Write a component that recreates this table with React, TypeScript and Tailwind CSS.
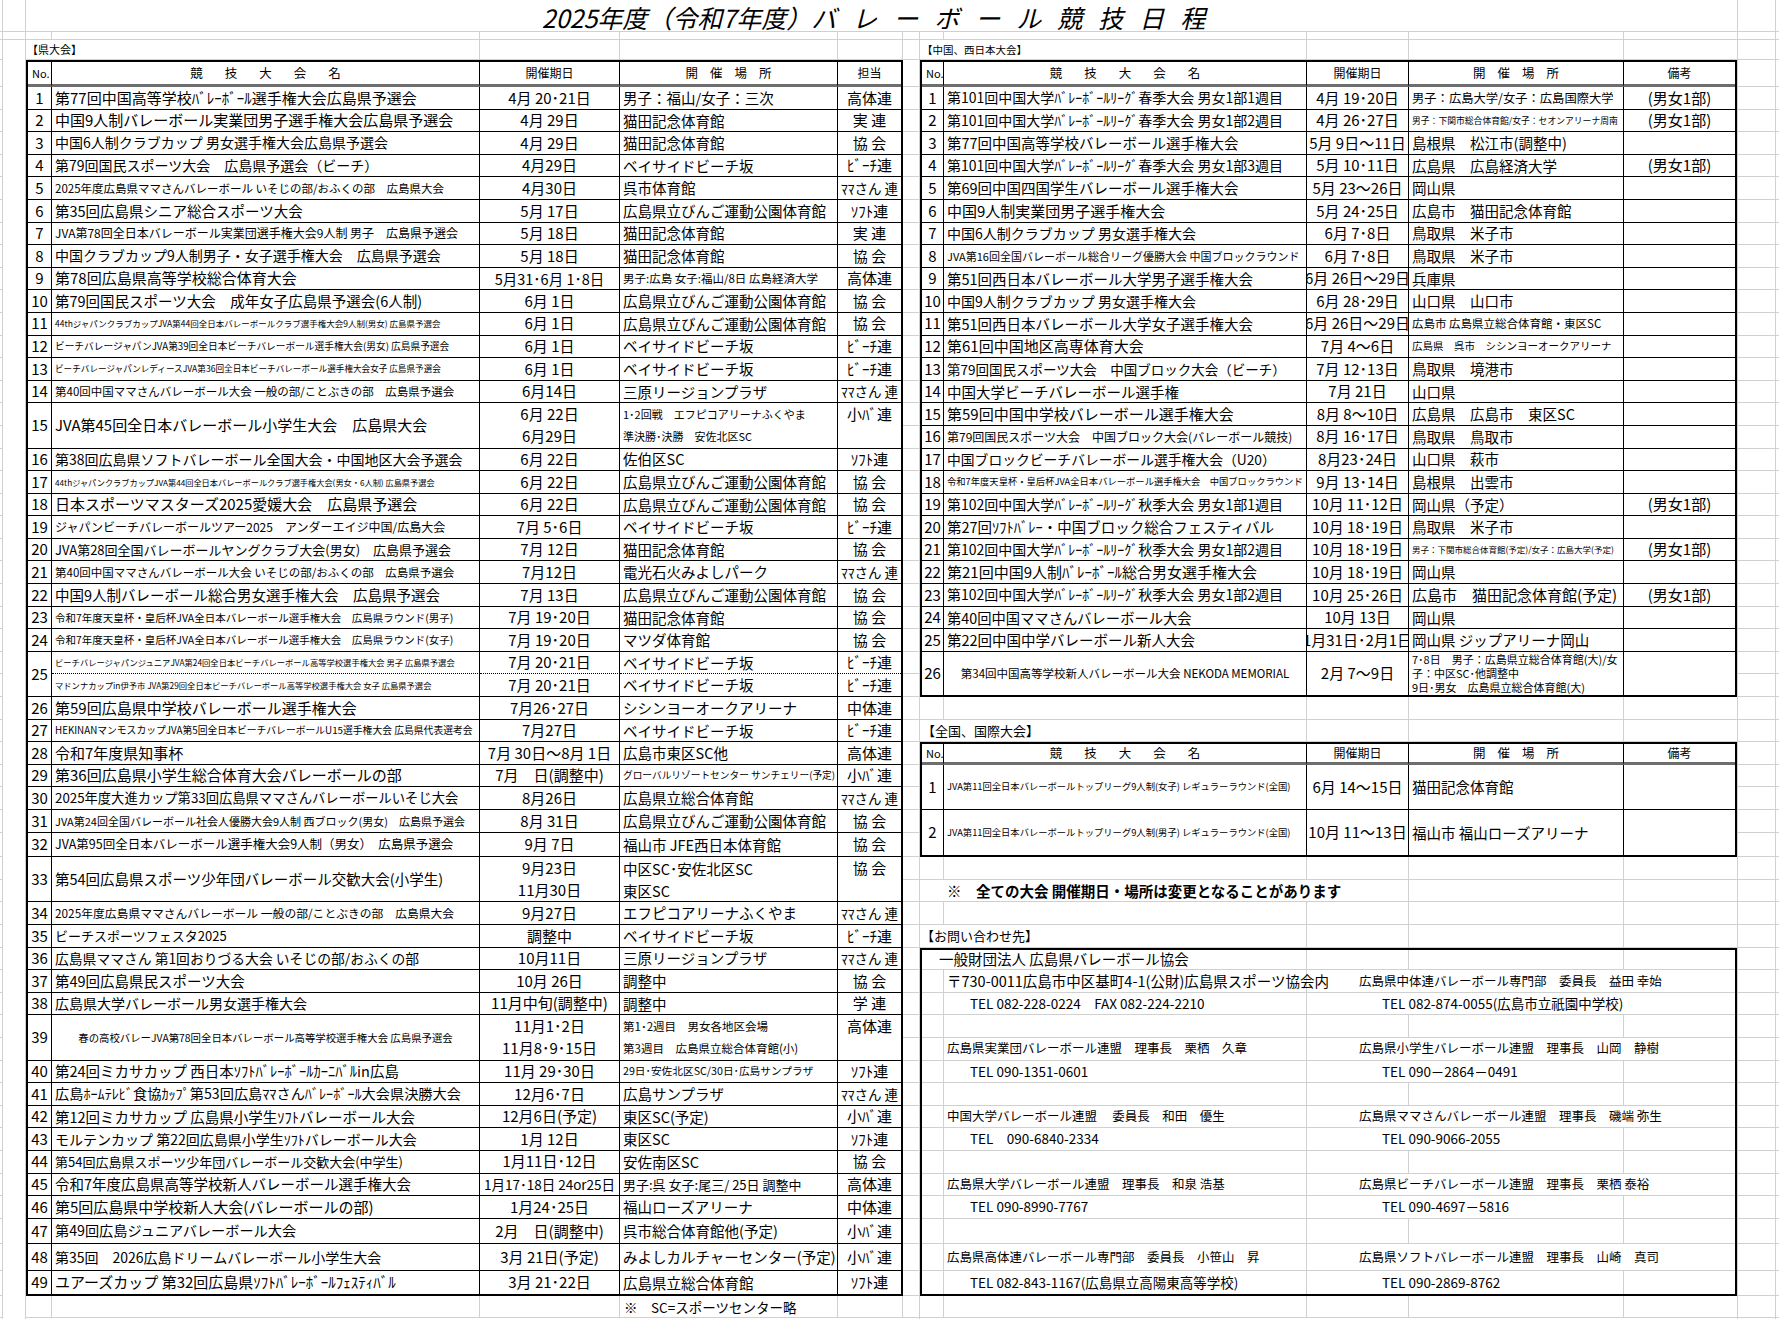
import React from 'react';
import clsx, { type ClassValue } from 'clsx';
import { twMerge } from 'tailwind-merge';

const cn = (...inputs: ClassValue[]) => twMerge(clsx(inputs));

type Pair = string | [string, string];

interface KenEntry {
  no: number;
  name: Pair;
  n?: string;
  date: Pair;
  d?: string;
  venue: Pair;
  v?: string;
  tag: Pair;
  dotted?: boolean;
  center?: boolean;
}

interface BlockEntry {
  no: number;
  name: string;
  n?: string;
  date: string;
  venue: React.ReactNode;
  v?: string;
  note?: string;
  center?: boolean;
}

// sheet row heights below the table headers
const S_ROWS: string[] = [
  ...Array(33).fill('h-[22.6px]'),
  'h-[24.6px]',
  ...Array(16).fill('h-[22.6px]'),
  'h-[25.6px]',
  'h-[26.6px]',
  'h-[25px]',
];
const BODY_ROWS = ['h-[8px]', 'h-[20px]', 'h-[27px]', ...S_ROWS, 'h-[22.6px]', 'h-[22.6px]'];
const PAGE_ROWS = ['h-[32px]', ...BODY_ROWS];

const W_L = ['w-[26px]', 'w-[428px]', 'w-[140px]', 'w-[218px]', 'w-[65px]'];
const W_R = ['w-[24px]', 'w-[363px]', 'w-[102px]', 'w-[215px]', 'w-[113px]'];

const KEN: KenEntry[] = [
  { no: 1, name: '第77回中国高等学校ﾊﾞﾚｰﾎﾞｰﾙ選手権大会広島県予選会', date: '4月 20･21日', venue: '男子：福山/女子：三次', tag: '高体連' },
  { no: 2, name: '中国9人制バレーボール実業団男子選手権大会広島県予選会', date: '4月 29日', venue: '猫田記念体育館', tag: '実 連' },
  { no: 3, name: '中国6人制クラブカップ 男女選手権大会広島県予選会', n: 'text-[14px]', date: '4月 29日', venue: '猫田記念体育館', tag: '協 会' },
  { no: 4, name: '第79回国民スポーツ大会　広島県予選会（ビーチ）', n: 'text-[14px]', date: '4月29日', venue: 'ベイサイドビーチ坂', tag: 'ﾋﾞｰﾁ連' },
  { no: 5, name: '2025年度広島県ママさんバレーボール いそじの部/おふくの部　広島県大会', n: 'text-[11.5px]', date: '4月30日', venue: '呉市体育館', tag: 'ﾏﾏさん 連' },
  { no: 6, name: '第35回広島県シニア総合スポーツ大会', n: 'text-[14.5px]', date: '5月 17日', venue: '広島県立びんご運動公園体育館', tag: 'ｿﾌﾄ連' },
  { no: 7, name: 'JVA第78回全日本バレーボール実業団選手権大会9人制 男子　広島県予選会', n: 'text-[12px]', date: '5月 18日', venue: '猫田記念体育館', tag: '実 連' },
  { no: 8, name: '中国クラブカップ9人制男子・女子選手権大会　広島県予選会', n: 'text-[14px]', date: '5月 18日', venue: '猫田記念体育館', tag: '協 会' },
  { no: 9, name: '第78回広島県高等学校総合体育大会', date: '5月31･6月 1･8日', d: 'text-[14.5px]', venue: '男子:広島 女子:福山/8日 広島経済大学', v: 'text-[11.5px]', tag: '高体連' },
  { no: 10, name: '第79回国民スポーツ大会　成年女子広島県予選会(6人制)', n: 'text-[14.5px]', date: '6月 1日', venue: '広島県立びんご運動公園体育館', tag: '協 会' },
  { no: 11, name: '44thジャパンクラブカップJVA第44回全日本バレーボールクラブ選手権大会9人制(男女) 広島県予選会', n: 'text-[8.5px]', date: '6月 1日', venue: '広島県立びんご運動公園体育館', tag: '協 会' },
  { no: 12, name: 'ビーチバレージャパンJVA第39回全日本ビーチバレーボール選手権大会(男女) 広島県予選会', n: 'text-[9.7px]', date: '6月 1日', venue: 'ベイサイドビーチ坂', tag: 'ﾋﾞｰﾁ連' },
  { no: 13, name: 'ビーチバレージャパンレディースJVA第36回全日本ビーチバレーボール選手権大会女子 広島県予選会', n: 'text-[8.6px]', date: '6月 1日', venue: 'ベイサイドビーチ坂', tag: 'ﾋﾞｰﾁ連' },
  { no: 14, name: '第40回中国ママさんバレーボール大会 一般の部/ことぶきの部　広島県予選会', n: 'text-[11.5px]', date: '6月14日', venue: '三原リージョンプラザ', tag: 'ﾏﾏさん 連' },
  { no: 15, name: 'JVA第45回全日本バレーボール小学生大会　広島県大会', date: ['6月 22日', '6月29日'], venue: ['1･2回戦　エフピコアリーナふくやま', '準決勝･決勝　安佐北区SC'], v: 'text-[11px]', tag: ['小ﾊﾞ連', ''] },
  { no: 16, name: '第38回広島県ソフトバレーボール全国大会・中国地区大会予選会', n: 'text-[14px]', date: '6月 22日', venue: '佐伯区SC', tag: 'ｿﾌﾄ連' },
  { no: 17, name: '44thジャパンクラブカップJVA第44回全日本バレーボールクラブ選手権大会(男女・6人制) 広島県予選会', n: 'text-[8.2px]', date: '6月 22日', venue: '広島県立びんご運動公園体育館', tag: '協 会' },
  { no: 18, name: '日本スポーツマスターズ2025愛媛大会　広島県予選会', date: '6月 22日', venue: '広島県立びんご運動公園体育館', tag: '協 会' },
  { no: 19, name: 'ジャパンビーチバレーボールツアー2025　アンダーエイジ中国/広島大会', n: 'text-[12px]', date: '7月 5･6日', venue: 'ベイサイドビーチ坂', tag: 'ﾋﾞｰﾁ連' },
  { no: 20, name: 'JVA第28回全国バレーボールヤングクラブ大会(男女)　広島県予選会', n: 'text-[13px]', date: '7月 12日', venue: '猫田記念体育館', tag: '協 会' },
  { no: 21, name: '第40回中国ママさんバレーボール大会 いそじの部/おふくの部　広島県予選会', n: 'text-[11.5px]', date: '7月12日', venue: '電光石火みよしパーク', tag: 'ﾏﾏさん 連' },
  { no: 22, name: '中国9人制バレーボール総合男女選手権大会　広島県予選会', n: 'text-[14.5px]', date: '7月 13日', venue: '広島県立びんご運動公園体育館', tag: '協 会' },
  { no: 23, name: '令和7年度天皇杯・皇后杯JVA全日本バレーボール選手権大会　広島県ラウンド(男子)', n: 'text-[10.5px]', date: '7月 19･20日', venue: '猫田記念体育館', tag: '協 会' },
  { no: 24, name: '令和7年度天皇杯・皇后杯JVA全日本バレーボール選手権大会　広島県ラウンド(女子)', n: 'text-[10.5px]', date: '7月 19･20日', venue: 'マツダ体育館', tag: '協 会' },
  {
    no: 25,
    name: [
      'ビーチバレージャパンジュニアJVA第24回全日本ビーチバレーボール高等学校選手権大会 男子 広島県予選会',
      'マドンナカップin伊予市 JVA第29回全日本ビーチバレーボール高等学校選手権大会 女子 広島県予選会',
    ],
    n: 'text-[8.3px]',
    date: ['7月 20･21日', '7月 20･21日'],
    venue: ['ベイサイドビーチ坂', 'ベイサイドビーチ坂'],
    tag: ['ﾋﾞｰﾁ連', 'ﾋﾞｰﾁ連'],
    dotted: true,
  },
  { no: 26, name: '第59回広島県中学校バレーボール選手権大会', date: '7月26･27日', venue: 'シシンヨーオークアリーナ', tag: '中体連' },
  { no: 27, name: 'HEKINANマンモスカップJVA第5回全日本ビーチバレーボールU15選手権大会 広島県代表選考会', n: 'text-[9.8px]', date: '7月27日', venue: 'ベイサイドビーチ坂', tag: 'ﾋﾞｰﾁ連' },
  { no: 28, name: '令和7年度県知事杯', date: '7月 30日～8月 1日', venue: '広島市東区SC他', tag: '高体連' },
  { no: 29, name: '第36回広島県小学生総合体育大会バレーボールの部', date: '7月　日(調整中)', venue: 'グローバルリゾートセンター サンチェリー(予定)', v: 'text-[9.7px]', tag: '小ﾊﾞ連' },
  { no: 30, name: '2025年度大進カップ第33回広島県ママさんバレーボールいそじ大会', n: 'text-[13.3px]', date: '8月26日', venue: '広島県立総合体育館', tag: 'ﾏﾏさん 連' },
  { no: 31, name: 'JVA第24回全国バレーボール社会人優勝大会9人制 西ブロック(男女)　広島県予選会', n: 'text-[11px]', date: '8月 31日', venue: '広島県立びんご運動公園体育館', tag: '協 会' },
  { no: 32, name: 'JVA第95回全日本バレーボール選手権大会9人制（男女）　広島県予選会', n: 'text-[12.5px]', date: '9月 7日', venue: '福山市 JFE西日本体育館', tag: '協 会' },
  { no: 33, name: '第54回広島県スポーツ少年団バレーボール交歓大会(小学生)', n: 'text-[14.5px]', date: ['9月23日', '11月30日'], venue: ['中区SC･安佐北区SC', '東区SC'], tag: ['協 会', ''] },
  { no: 34, name: '2025年度広島県ママさんバレーボール 一般の部/ことぶきの部　広島県大会', n: 'text-[11.8px]', date: '9月27日', venue: 'エフピコアリーナふくやま', tag: 'ﾏﾏさん 連' },
  { no: 35, name: 'ビーチスポーツフェスタ2025', n: 'text-[13px]', date: '調整中', venue: 'ベイサイドビーチ坂', tag: 'ﾋﾞｰﾁ連' },
  { no: 36, name: '広島県ママさん 第1回おりづる大会 いそじの部/おふくの部', n: 'text-[13.8px]', date: '10月11日', venue: '三原リージョンプラザ', tag: 'ﾏﾏさん 連' },
  { no: 37, name: '第49回広島県民スポーツ大会', n: 'text-[14.5px]', date: '10月 26日', venue: '調整中', tag: '協 会' },
  { no: 38, name: '広島県大学バレーボール男女選手権大会', n: 'text-[14px]', date: '11月中旬(調整中)', venue: '調整中', tag: '学 連' },
  { no: 39, name: '春の高校バレーJVA第78回全日本バレーボール高等学校選手権大会 広島県予選会', n: 'text-[10.4px]', center: true, date: ['11月1･2日', '11月8･9･15日'], venue: ['第1･2週目　男女各地区会場', '第3週目　広島県立総合体育館(小)'], v: 'text-[11.5px]', tag: ['高体連', ''] },
  { no: 40, name: '第24回ミカサカップ 西日本ｿﾌﾄﾊﾞﾚｰﾎﾞｰﾙｶｰﾆﾊﾞﾙin広島', n: 'text-[14.5px]', date: '11月 29･30日', venue: '29日･安佐北区SC/30日･広島サンプラザ', v: 'text-[10.7px]', tag: 'ｿﾌﾄ連' },
  { no: 41, name: '広島ﾎｰﾑﾃﾚﾋﾞ食協ｶｯﾌﾟ第53回広島ﾏﾏさんﾊﾞﾚｰﾎﾞｰﾙ大会県決勝大会', n: 'text-[14.2px]', date: '12月6･7日', venue: '広島サンプラザ', tag: 'ﾏﾏさん 連' },
  { no: 42, name: '第12回ミカサカップ 広島県小学生ｿﾌﾄバレーボール大会', n: 'text-[14.5px]', date: '12月6日(予定)', venue: '東区SC(予定)', tag: '小ﾊﾞ連' },
  { no: 43, name: 'モルテンカップ 第22回広島県小学生ｿﾌﾄバレーボール大会', n: 'text-[14px]', date: '1月 12日', venue: '東区SC', tag: 'ｿﾌﾄ連' },
  { no: 44, name: '第54回広島県スポーツ少年団バレーボール交歓大会(中学生)', n: 'text-[13px]', date: '1月11日･12日', venue: '安佐南区SC', tag: '協 会' },
  { no: 45, name: '令和7年度広島県高等学校新人バレーボール選手権大会', n: 'text-[14.5px]', date: '1月17･18日 24or25日', d: 'text-[13.5px]', venue: '男子:呉 女子:尾三/ 25日 調整中', v: 'text-[13px]', tag: '高体連' },
  { no: 46, name: '第5回広島県中学校新人大会(バレーボールの部)', date: '1月24･25日', venue: '福山ローズアリーナ', tag: '中体連' },
  { no: 47, name: '第49回広島ジュニアバレーボール大会', n: 'text-[14.2px]', date: '2月　日(調整中)', venue: '呉市総合体育館他(予定)', tag: '小ﾊﾞ連' },
  { no: 48, name: '第35回　2026広島ドリームバレーボール小学生大会', n: 'text-[14px]', date: '3月 21日(予定)', venue: 'みよしカルチャーセンター(予定)', tag: '小ﾊﾞ連' },
  { no: 49, name: 'ユアーズカップ 第32回広島県ｿﾌﾄﾊﾞﾚｰﾎﾞｰﾙﾌｪｽﾃｨﾊﾞﾙ', date: '3月 21･22日', venue: '広島県立総合体育館', tag: 'ｿﾌﾄ連' },
];

const BUBU = '(男女1部)';

const CHUGOKU: BlockEntry[] = [
  { no: 1, name: '第101回中国大学ﾊﾞﾚｰﾎﾞｰﾙﾘｰｸﾞ春季大会 男女1部1週目', n: 'text-[14px]', date: '4月 19･20日', venue: '男子：広島大学/女子：広島国際大学', v: 'text-[12.3px]', note: BUBU },
  { no: 2, name: '第101回中国大学ﾊﾞﾚｰﾎﾞｰﾙﾘｰｸﾞ春季大会 男女1部2週目', n: 'text-[14px]', date: '4月 26･27日', venue: '男子：下関市総合体育館/女子：セオンアリーナ周南', v: 'text-[8.8px]', note: BUBU },
  { no: 3, name: '第77回中国高等学校バレーボール選手権大会', date: '5月 9日～11日', venue: '島根県　松江市(調整中)' },
  { no: 4, name: '第101回中国大学ﾊﾞﾚｰﾎﾞｰﾙﾘｰｸﾞ春季大会 男女1部3週目', n: 'text-[14px]', date: '5月 10･11日', venue: '広島県　広島経済大学', note: BUBU },
  { no: 5, name: '第69回中国四国学生バレーボール選手権大会', date: '5月 23～26日', venue: '岡山県' },
  { no: 6, name: '中国9人制実業団男子選手権大会', n: 'text-[15px]', date: '5月 24･25日', venue: '広島市　猫田記念体育館' },
  { no: 7, name: '中国6人制クラブカップ 男女選手権大会', n: 'text-[14px]', date: '6月 7･8日', venue: '鳥取県　米子市' },
  { no: 8, name: 'JVA第16回全国バレーボール総合リーグ優勝大会 中国ブロックラウンド', n: 'text-[11px]', date: '6月 7･8日', venue: '鳥取県　米子市' },
  { no: 9, name: '第51回西日本バレーボール大学男子選手権大会', date: '6月 26日～29日', venue: '兵庫県' },
  { no: 10, name: '中国9人制クラブカップ 男女選手権大会', n: 'text-[14px]', date: '6月 28･29日', venue: '山口県　山口市' },
  { no: 11, name: '第51回西日本バレーボール大学女子選手権大会', date: '6月 26日～29日', venue: '広島市 広島県立総合体育館・東区SC', v: 'text-[11.5px]' },
  { no: 12, name: '第61回中国地区高専体育大会', n: 'text-[15px]', date: '7月 4～6日', venue: '広島県　呉市　シシンヨーオークアリーナ', v: 'text-[10.5px]' },
  { no: 13, name: '第79回国民スポーツ大会　中国ブロック大会（ビーチ）', n: 'text-[13.5px]', date: '7月 12･13日', venue: '鳥取県　境港市' },
  { no: 14, name: '中国大学ビーチバレーボール選手権', date: '7月 21日', venue: '山口県' },
  { no: 15, name: '第59回中国中学校バレーボール選手権大会', n: 'text-[15px]', date: '8月 8～10日', venue: '広島県　広島市　東区SC' },
  { no: 16, name: '第79回国民スポーツ大会　中国ブロック大会(バレーボール競技)', n: 'text-[12px]', date: '8月 16･17日', venue: '鳥取県　鳥取市' },
  { no: 17, name: '中国ブロックビーチバレーボール選手権大会（U20）', n: 'text-[13.8px]', date: '8月23･24日', venue: '山口県　萩市' },
  { no: 18, name: '令和7年度天皇杯・皇后杯JVA全日本バレーボール選手権大会　中国ブロックラウンド', n: 'text-[9.3px]', date: '9月 13･14日', venue: '島根県　出雲市' },
  { no: 19, name: '第102回中国大学ﾊﾞﾚｰﾎﾞｰﾙﾘｰｸﾞ秋季大会 男女1部1週目', n: 'text-[14px]', date: '10月 11･12日', venue: '岡山県（予定）', note: BUBU },
  { no: 20, name: '第27回ｿﾌﾄﾊﾞﾚｰ・中国ブロック総合フェスティバル', date: '10月 18･19日', venue: '鳥取県　米子市' },
  { no: 21, name: '第102回中国大学ﾊﾞﾚｰﾎﾞｰﾙﾘｰｸﾞ秋季大会 男女1部2週目', n: 'text-[14px]', date: '10月 18･19日', venue: '男子：下関市総合体育館(予定)/女子：広島大学(予定)', v: 'text-[8.5px]', note: BUBU },
  { no: 22, name: '第21回中国9人制ﾊﾞﾚｰﾎﾞｰﾙ総合男女選手権大会', n: 'text-[15px]', date: '10月 18･19日', venue: '岡山県' },
  { no: 23, name: '第102回中国大学ﾊﾞﾚｰﾎﾞｰﾙﾘｰｸﾞ秋季大会 男女1部2週目', n: 'text-[14px]', date: '10月 25･26日', venue: '広島市　猫田記念体育館(予定)', v: 'text-[15px]', note: BUBU },
  { no: 24, name: '第40回中国ママさんバレーボール大会', n: 'text-[14.3px]', date: '10月 13日', venue: '岡山県' },
  { no: 25, name: '第22回中国中学バレーボール新人大会', date: '1月31日･2月1日', venue: '岡山県 ジップアリーナ岡山' },
  {
    no: 26,
    name: '第34回中国高等学校新人バレーボール大会 NEKODA MEMORIAL',
    n: 'text-[11.5px]',
    center: true,
    date: '2月 7～9日',
    venue: (
      <span className="flex flex-col gap-0 leading-[14px]">
        <span>7･8日　男子：広島県立総合体育館(大)/女</span>
        <span>子：中区SC･他調整中</span>
        <span>9日･男女　広島県立総合体育館(大)</span>
      </span>
    ),
    v: 'text-[11px]',
  },
];

const ZENKOKU: BlockEntry[] = [
  { no: 1, name: 'JVA第11回全日本バレーボールトップリーグ9人制(女子) レギュラーラウンド(全国)', n: 'text-[9.3px]', date: '6月 14～15日', venue: '猫田記念体育館' },
  { no: 2, name: 'JVA第11回全日本バレーボールトップリーグ9人制(男子) レギュラーラウンド(全国)', n: 'text-[9.3px]', date: '10月 11～13日', venue: '福山市 福山ローズアリーナ' },
];

type ContactRow =
  | { kind: 'empty' }
  | { kind: 'head'; a: string }
  | { kind: 'name'; a: string; b: string; as?: string }
  | { kind: 'tel'; a: string; b: string; wide?: boolean };

const CONTACT: ContactRow[] = [
  { kind: 'head', a: '一般財団法人 広島県バレーボール協会' },
  { kind: 'name', a: '〒730-0011広島市中区基町4-1(公財)広島県スポーツ協会内', as: 'text-[14.5px]', b: '広島県中体連バレーボール専門部　委員長　益田 幸始' },
  { kind: 'tel', a: 'TEL 082-228-0224　FAX 082-224-2210', b: 'TEL 082-874-0055(広島市立祇園中学校)', wide: true },
  { kind: 'empty' },
  { kind: 'name', a: '広島県実業団バレーボール連盟　理事長　栗栖　久章', b: '広島県小学生バレーボール連盟　理事長　山岡　静樹' },
  { kind: 'tel', a: 'TEL 090-1351-0601', b: 'TEL 090－2864－0491' },
  { kind: 'empty' },
  { kind: 'name', a: '中国大学バレーボール連盟　 委員長　和田　優生', b: '広島県ママさんバレーボール連盟　理事長　磯端 弥生' },
  { kind: 'tel', a: 'TEL　090-6840-2334', b: 'TEL 090-9066-2055' },
  { kind: 'empty' },
  { kind: 'name', a: '広島県大学バレーボール連盟　理事長　和泉 浩基', b: '広島県ビーチバレーボール連盟　理事長　栗栖 泰裕' },
  { kind: 'tel', a: 'TEL 090-8990-7767', b: 'TEL 090-4697－5816' },
  { kind: 'empty' },
  { kind: 'name', a: '広島県高体連バレーボール専門部　委員長　小笹山　昇', b: '広島県ソフトバレーボール連盟　理事長　山崎　真司' },
  { kind: 'tel', a: 'TEL 082-843-1167(広島県立高陽東高等学校)', b: 'TEL 090-2869-8762' },
];

function Td({ className, children }: { className?: string; children?: React.ReactNode }) {
  return (
    <div
      className={cn(
        'flex min-w-0 items-center overflow-hidden whitespace-nowrap border-b border-r border-black leading-none',
        className,
      )}
    >
      {children}
    </div>
  );
}

function Lc({ w, className, children }: { w?: string; className?: string; children?: React.ReactNode }) {
  return (
    <div
      className={cn(
        'flex shrink-0 items-center whitespace-nowrap border-b border-r border-[#d0d0d0] leading-none',
        w,
        className,
      )}
    >
      {children}
    </div>
  );
}

function LightRow({ h, widths, children }: { h: string; widths?: string[]; children?: React.ReactNode }) {
  return <div className={cn('flex shrink-0', h)}>{children ?? widths?.map((w, i) => <Lc key={i} w={w} />)}</div>;
}

function Strip({ rows, className }: { rows: string[]; className?: string }) {
  return (
    <div className={cn('flex shrink-0 flex-col', className)}>
      {rows.map((h, i) => (
        <div key={i} className={cn('shrink-0 border-b border-[#d0d0d0]', h)} />
      ))}
    </div>
  );
}

function Spaced({ text, className }: { text: string; className?: string }) {
  return (
    <span className={cn('flex', className)}>
      {text.split('').map((c, i) => (
        <span key={i}>{c}</span>
      ))}
    </span>
  );
}

function HeadRow({ last }: { last: string }) {
  const h = 'border-b-[3px] border-b-[#6e6e6e] text-[12.5px]';
  return (
    <>
      <Td className={cn(h, 'pl-[4px] text-[11px]')}>No.</Td>
      <Td className={cn(h, 'justify-center')}>
        <Spaced text="競技大会名" className="gap-[22px]" />
      </Td>
      <Td className={cn(h, 'justify-center text-[12px]')}>開催期日</Td>
      <Td className={cn(h, 'justify-center')}>
        <Spaced text="開催場所" className="gap-[12px]" />
      </Td>
      <Td className={cn(h, 'justify-center border-r-0 text-[12px]')}>{last}</Td>
    </>
  );
}

function tagSize(t: string) {
  return t.includes('ﾏﾏ') ? 'text-[13.5px]' : 'text-[15px]';
}

function KenRow({ e, last }: { e: KenEntry; last: boolean }) {
  const nameCls = cn('pl-[3px]', e.n ?? 'text-[15px]', e.center && 'justify-center pl-0');
  const dateCls = cn('justify-center', e.d ?? 'text-[15px]');
  const venueCls = cn('pl-[3px]', e.v ?? 'text-[14.5px]');
  const end = last ? 'border-b-0' : '';

  if (!Array.isArray(e.date)) {
    const tag = e.tag as string;
    return (
      <>
        <Td className={cn('justify-center text-[15px]', end)}>{e.no}</Td>
        <Td className={cn(nameCls, end)}>{e.name}</Td>
        <Td className={cn(dateCls, end)}>{e.date}</Td>
        <Td className={cn(venueCls, end)}>{e.venue}</Td>
        <Td className={cn('justify-center border-r-0', tagSize(tag), end)}>{tag}</Td>
      </>
    );
  }

  const venue = e.venue as [string, string];
  const tag = e.tag as [string, string];
  const top = e.dotted ? '[border-bottom-style:dotted]' : 'border-b-0';
  const split = Array.isArray(e.name);
  return (
    <>
      <Td className={cn('row-span-2 justify-center text-[15px]', end)}>{e.no}</Td>
      {split ? (
        <Td className={cn(nameCls, top)}>{e.name[0]}</Td>
      ) : (
        <Td className={cn('row-span-2', nameCls, end)}>{e.name}</Td>
      )}
      <Td className={cn(dateCls, top)}>{e.date[0]}</Td>
      <Td className={cn(venueCls, top)}>{venue[0]}</Td>
      <Td className={cn('justify-center border-r-0', tagSize(tag[0]), top)}>{tag[0]}</Td>
      {split && <Td className={cn(nameCls, end)}>{e.name[1]}</Td>}
      <Td className={cn(dateCls, end)}>{e.date[1]}</Td>
      <Td className={cn(venueCls, end)}>{venue[1]}</Td>
      <Td className={cn('justify-center border-r-0', tagSize(tag[1]), end)}>{tag[1]}</Td>
    </>
  );
}

function BlockRow({ e, last }: { e: BlockEntry; last: boolean }) {
  const end = last ? 'border-b-0' : '';
  return (
    <>
      <Td className={cn('justify-center text-[15px]', end)}>{e.no}</Td>
      <Td className={cn('pl-[3px]', e.n ?? 'text-[14.5px]', e.center && 'justify-center pl-0', end)}>{e.name}</Td>
      <Td className={cn('justify-center text-[15px]', end)}>{e.date}</Td>
      <Td className={cn('pl-[3px]', e.v ?? 'text-[14.5px]', end)}>{e.venue}</Td>
      <Td className={cn('justify-center border-r-0 text-[15px]', end)}>{e.note}</Td>
    </>
  );
}

function ContactBox() {
  const line = 'border-b border-r border-[#d0d0d0]';
  return (
    <div className="grid w-fit grid-cols-[22px_363px_102px_215px_111px] grid-rows-[20.6px_repeat(11,22.6px)_25.6px_26.6px_23px] border-2 border-black text-[12.5px] leading-none">
      {CONTACT.map((r, i) => {
        const end = i === CONTACT.length - 1 ? 'border-b-0' : '';
        const cell = cn('flex items-center whitespace-nowrap', line, end);
        if (r.kind === 'empty')
          return (
            <React.Fragment key={i}>
              <div className={cell} />
              <div className={cell} />
              <div className={cell} />
              <div className={cell} />
              <div className={cn(cell, 'border-r-0')} />
            </React.Fragment>
          );
        if (r.kind === 'head')
          return (
            <React.Fragment key={i}>
              <div className={cn(cell, 'col-span-2 pl-[17px] text-[14.5px]')}>{r.a}</div>
              <div className={cell} />
              <div className={cell} />
              <div className={cn(cell, 'border-r-0')} />
            </React.Fragment>
          );
        if (r.kind === 'name')
          return (
            <React.Fragment key={i}>
              <div className={cell} />
              <div className={cn(cell, 'pl-[3px]', r.as)}>{r.a}</div>
              <div className={cn(cell, 'col-span-3 border-r-0 pl-[52px]')}>{r.b}</div>
            </React.Fragment>
          );
        return (
          <React.Fragment key={i}>
            <div className={cell} />
            <div className={cn(cell, 'pl-[26px] text-[13.5px]')}>{r.a}</div>
            {r.wide ? (
              <div className={cn(cell, 'col-span-3 border-r-0 pl-[75px] text-[13.5px]')}>{r.b}</div>
            ) : (
              <>
                <div className={cn(cell, 'col-span-2 pl-[75px] text-[13.5px]')}>{r.b}</div>
                <div className={cn(cell, 'border-r-0')} />
              </>
            )}
          </React.Fragment>
        );
      })}
    </div>
  );
}

function LeftArea() {
  return (
    <div className="flex w-[877px] shrink-0 flex-col">
      <LightRow h="h-[8px]" widths={W_L} />
      <LightRow h="h-[20px]">
        <Lc w="w-[454px]" className="pl-[1px] text-[11px]">
          【県大会】
        </Lc>
        <Lc w="w-[140px]" />
        <Lc w="w-[218px]" />
        <Lc w="w-[65px]" />
      </LightRow>
      <div className="grid w-fit grid-cols-[24px_428px_140px_218px_63px] grid-rows-[25px_repeat(33,22.6px)_24.6px_repeat(16,22.6px)_25.6px_26.6px_23px] border-2 border-black">
        <HeadRow last="担当" />
        {KEN.map((e, i) => (
          <KenRow key={e.no} e={e} last={i === KEN.length - 1} />
        ))}
      </div>
      <LightRow h="h-[22.6px]">
        <Lc w="w-[26px]" />
        <Lc w="w-[428px]" />
        <Lc w="w-[140px]" />
        <Lc w="w-[218px]" className="pl-[4px] text-[13.5px]">
          ※　SC=スポーツセンター略
        </Lc>
        <Lc w="w-[65px]" />
      </LightRow>
    </div>
  );
}

function RightArea() {
  const rest = (
    <>
      <Lc w="w-[102px]" />
      <Lc w="w-[215px]" />
      <Lc w="w-[113px]" className="border-r-0" />
    </>
  );
  const widths = [...W_R.slice(0, 4), 'w-[113px] border-r-0'];
  return (
    <div className="flex w-[817px] shrink-0 flex-col">
      <LightRow h="h-[8px]" widths={widths} />
      <LightRow h="h-[20px]">
        <Lc w="w-[387px]" className="pl-[2px] text-[10.5px]">
          【中国、西日本大会】
        </Lc>
        {rest}
      </LightRow>
      <div className="grid w-fit grid-cols-[22px_363px_102px_215px_111px] grid-rows-[25px_repeat(25,22.6px)_43.2px] border-2 border-black">
        <HeadRow last="備考" />
        {CHUGOKU.map((e, i) => (
          <BlockRow key={e.no} e={e} last={i === CHUGOKU.length - 1} />
        ))}
      </div>
      <LightRow h="h-[22.6px]" widths={widths} />
      <LightRow h="h-[22.6px]">
        <Lc w="w-[387px]" className="pl-[2px] text-[13px]">
          【全国、国際大会】
        </Lc>
        {rest}
      </LightRow>
      <div className="grid w-fit grid-cols-[22px_363px_102px_215px_111px] grid-rows-[20.6px_45.2px_45.2px] border-2 border-black">
        <HeadRow last="備考" />
        {ZENKOKU.map((e, i) => (
          <BlockRow key={e.no} e={e} last={i === ZENKOKU.length - 1} />
        ))}
      </div>
      <LightRow h="h-[22.6px]" widths={widths} />
      <LightRow h="h-[22.6px]">
        <Lc w="w-[489px]" className="pl-[27px] text-[14.5px] font-bold">
          ※　全ての大会 開催期日・場所は変更となることがあります
        </Lc>
        <Lc w="w-[215px]" />
        <Lc w="w-[113px]" className="border-r-0" />
      </LightRow>
      <LightRow h="h-[22.6px]" widths={widths} />
      <LightRow h="h-[22.6px]">
        <Lc w="w-[387px]" className="pl-[1px] text-[13px]">
          【お問い合わせ先】
        </Lc>
        {rest}
      </LightRow>
      <ContactBox />
      <LightRow h="h-[22.6px]" widths={widths} />
    </div>
  );
}

export default function App() {
  return (
    <div className="flex h-[1319px] w-[1779px] overflow-hidden bg-white font-['Noto_Sans_CJK_JP',sans-serif] text-black">
      <div className="flex w-[26px] shrink-0">
        <Strip rows={PAGE_ROWS} className="w-[3px] border-r border-[#d0d0d0]" />
        <div className="flex w-[23px] flex-col border-r border-[#d0d0d0]">
          <div className="h-[32px] border-b border-[#d0d0d0]" />
          <div className="h-[8px] border-b border-[#d0d0d0]" />
        </div>
      </div>

      <div className="flex w-[1711px] shrink-0 flex-col">
        <div className="flex h-[32px] shrink-0 items-start justify-center border-b border-[#d0d0d0] pt-[3px]">
          <h1 className="text-[25px] italic leading-[28px]">
            2025年度（令和7年度）<span className="tracking-[16px]">バレーボール競技日程</span>
          </h1>
        </div>
        <div className="flex">
          <LeftArea />
          <Strip rows={BODY_ROWS} className="w-[17px] border-r border-[#d0d0d0]" />
          <RightArea />
        </div>
      </div>

      <Strip rows={PAGE_ROWS} className="w-[39px] border-x border-[#d0d0d0]" />
      <Strip rows={PAGE_ROWS} className="w-[3px]" />
    </div>
  );
}
